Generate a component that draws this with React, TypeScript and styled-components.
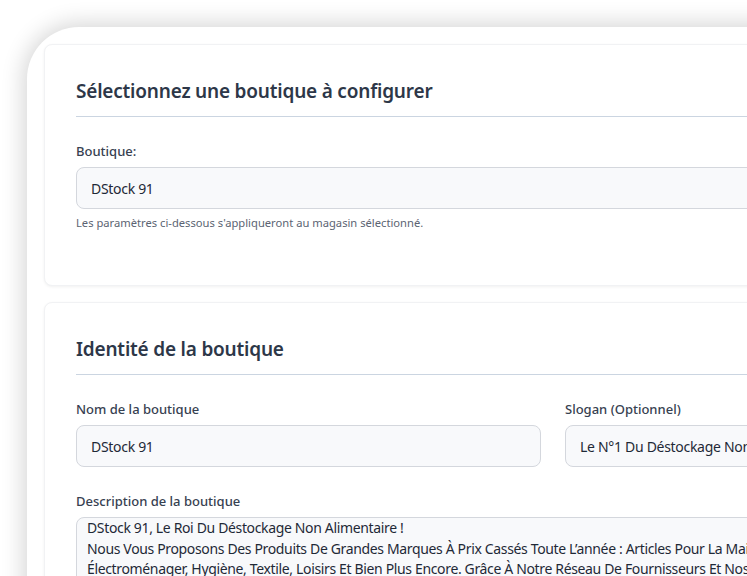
import { createGlobalStyle, styled } from 'styled-components';

const GlobalStyle = createGlobalStyle`
  html, body {
    margin: 0;
    padding: 0;
    background: #ffffff;
    overflow: hidden;
  }
  body {
    font-family: 'Noto Sans', 'Open Sans', sans-serif;
  }
`;

const description = [
  'DStock 91, Le Roi Du Déstockage Non Alimentaire !',
  'Nous Vous Proposons Des Produits De Grandes Marques À Prix Cassés Toute L’année : Articles Pour La Maison, Décoration,',
  'Électroménager, Hygiène, Textile, Loisirs Et Bien Plus Encore. Grâce À Notre Réseau De Fournisseurs Et Nos Arrivages,',
  'Profitez De Remises Exceptionnelles Tout Au Long De L’année.',
].join('\n');

function App() {
  return (
    <>
      <GlobalStyle />
      <StyledPage>
        <StyledFrame>
          <StyledCard>
            <StyledCardTitle>Sélectionnez une boutique à configurer</StyledCardTitle>
            <StyledField $spaced>
              <StyledLabel>Boutique:</StyledLabel>
              <StyledInput readOnly value="DStock 91" />
              <StyledHelp>Les paramètres ci-dessous s'appliqueront au magasin sélectionné.</StyledHelp>
            </StyledField>
          </StyledCard>

          <StyledCard>
            <StyledCardTitle>Identité de la boutique</StyledCardTitle>
            <StyledRow>
              <StyledField>
                <StyledLabel>Nom de la boutique</StyledLabel>
                <StyledInput readOnly value="DStock 91" />
              </StyledField>
              <StyledField>
                <StyledLabel>Slogan (Optionnel)</StyledLabel>
                <StyledInput readOnly value="Le N°1 Du Déstockage Non-Alimentaire Dans L'Essonne" />
              </StyledField>
            </StyledRow>
            <StyledField>
              <StyledLabel>Description de la boutique</StyledLabel>
              <StyledTextArea readOnly rows={6} value={description} />
            </StyledField>
          </StyledCard>
        </StyledFrame>
      </StyledPage>
    </>
  );
}

export default App;

const StyledPage = styled.div`
  width: 747px;
  height: 576px;
  padding: 27px 0 0 27px;
  box-sizing: border-box;
  overflow: hidden;
`;

const StyledFrame = styled.div`
  width: 1052px;
  min-height: 900px;
  box-sizing: border-box;
  padding: 17px;
  background: #ffffff;
  border-radius: 52px 0 0 0;
  box-shadow: 0 0 22px 4px rgba(0, 0, 0, 0.16);
  display: flex;
  flex-direction: column;
  gap: 16px;
`;

const StyledCard = styled.div`
  background: #ffffff;
  border: 1px solid #f1f2f4;
  border-radius: 8px;
  box-shadow: 0 1px 3px rgba(0, 0, 0, 0.06);
  padding: 31px 31px 32px;
  display: flex;
  flex-direction: column;
  gap: 24px;
`;

const StyledCardTitle = styled.h2`
  margin: 0;
  padding-bottom: 10px;
  border-bottom: 1px solid #cbd5e1;
  font-size: 19px;
  line-height: 30px;
  font-weight: 600;
  letter-spacing: -0.2px;
  color: #2d3748;
`;

const StyledRow = styled.div`
  display: grid;
  grid-template-columns: 1fr 1fr;
  gap: 24px;
`;

const StyledField = styled.div<{ $spaced?: boolean }>`
  display: flex;
  flex-direction: column;
  gap: 6px;
  margin-bottom: ${({ $spaced }) => ($spaced ? '22px' : '0')};
`;

const StyledLabel = styled.label`
  font-size: 13px;
  line-height: 20px;
  font-weight: 500;
  color: #374151;
`;

const StyledInput = styled.input`
  height: 42px;
  box-sizing: border-box;
  padding: 0 14px;
  background: #f8f9fb;
  border: 1px solid #d4d7dd;
  border-radius: 8px;
  font-family: inherit;
  font-size: 14px;
  letter-spacing: -0.3px;
  color: #1f2937;
  outline: none;
`;

const StyledHelp = styled.small`
  font-size: 11.2px;
  line-height: 16px;
  color: #5b6472;
`;

const StyledTextArea = styled.textarea`
  box-sizing: border-box;
  padding: 0 10px;
  background: #f8f9fb;
  border: 1px solid #d4d7dd;
  border-radius: 8px;
  font-family: inherit;
  font-size: 14px;
  line-height: 20.5px;
  letter-spacing: -0.35px;
  color: #1f2937;
  resize: none;
  outline: none;
`;
